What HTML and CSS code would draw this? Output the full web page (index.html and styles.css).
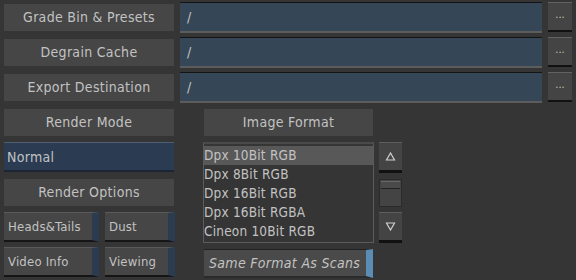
FILE: index.html
```html
<!DOCTYPE html>
<html>
<head>
<meta charset="utf-8">
<link rel="stylesheet" href="styles.css">
</head>
<body>
<div class="app">
  <div class="paths">
    <div class="path-row">
      <div class="label">Grade Bin &amp; Presets</div>
      <div class="field">/</div>
      <div class="dots">...</div>
    </div>
    <div class="path-row">
      <div class="label">Degrain Cache</div>
      <div class="field">/</div>
      <div class="dots">...</div>
    </div>
    <div class="path-row">
      <div class="label">Export Destination</div>
      <div class="field">/</div>
      <div class="dots">...</div>
    </div>
  </div>
  <div class="lower">
    <div class="col-left">
      <div class="label">Render Mode</div>
      <div class="select">Normal</div>
      <div class="label label-gap">Render Options</div>
      <div class="pair">
        <div class="toggle">Heads&amp;Tails</div>
        <div class="toggle">Dust</div>
      </div>
      <div class="pair">
        <div class="toggle">Video Info</div>
        <div class="toggle">Viewing</div>
      </div>
    </div>
    <div class="col-mid">
      <div class="label">Image Format</div>
      <div class="list">
        <div class="item sel">Dpx 10Bit RGB</div>
        <div class="item">Dpx 8Bit RGB</div>
        <div class="item">Dpx 16Bit RGB</div>
        <div class="item">Dpx 16Bit RGBA</div>
        <div class="item">Cineon 10Bit RGB</div>
      </div>
      <div class="same">Same Format As Scans</div>
    </div>
    <div class="col-scroll">
      <div class="sbtn">
        <svg width="11" height="9" viewBox="0 0 11 9"><path d="M5.5 1 L1.5 8 H9.5 Z" fill="none" stroke="#cfcfcf" stroke-width="1.2"/></svg>
      </div>
      <div class="track"><div class="thumb"></div></div>
      <div class="sbtn">
        <svg width="11" height="9" viewBox="0 0 11 9"><path d="M1.5 1 H9.5 L5.5 8 Z" fill="none" stroke="#cfcfcf" stroke-width="1.2"/></svg>
      </div>
    </div>
  </div>
</div>
</body>
</html>
```
FILE: styles.css
```css
html, body {
  margin: 0;
  padding: 0;
  background: #353535;
}
body {
  width: 576px;
  height: 280px;
  overflow: hidden;
  font-family: "DejaVu Sans", sans-serif;
  font-stretch: condensed;
  font-size: 14px;
  letter-spacing: 0.3px;
  color: #c2c2c2;
}
.app {
  padding-top: 2px;
}
.paths {
  display: flex;
  flex-direction: column;
  gap: 4px;
}
.path-row {
  display: flex;
  height: 31px;
}
.label {
  background: #464646;
  height: 27px;
  line-height: 27px;
  text-align: center;
  width: 170px;
  box-sizing: border-box;
}
.path-row .label {
  margin: 2px 0 0 4px;
}
.field {
  margin-left: 6px;
  width: 362px;
  box-sizing: border-box;
  background: #354656;
  border-top: 1px solid #141414;
  border-bottom: 2px solid #5c5c5c;
  line-height: 28px;
  padding-left: 7px;
}
.dots {
  margin-left: 6px;
  width: 24px;
  height: 30px;
  box-sizing: border-box;
  background: #444;
  border-top: 1px solid #626262;
  border-bottom: 2px solid #111;
  text-align: center;
  line-height: 24px;
  font-size: 11px;
  letter-spacing: 0px;
}
.lower {
  display: flex;
  margin-top: 6px;
}
.col-left {
  margin-left: 4px;
  width: 171px;
  display: flex;
  flex-direction: column;
}
.col-left .label { width: 170px; }
.select {
  margin-top: 6px;
  height: 30px;
  width: 170px;
  box-sizing: border-box;
  background: #2b3c52;
  border-top: 1px solid #4e5f73;
  border-bottom: 2px solid #1b2534;
  line-height: 28px;
  padding-left: 3px;
}
.label-gap { margin-top: 7px; }
.pair {
  display: flex;
  gap: 6px;
  margin-top: 6px;
}
.pair + .pair { margin-top: 5px; }
.toggle {
  height: 30px;
  box-sizing: border-box;
  background: #464646;
  border-top: 1px solid #5a5a5a;
  border-bottom: 2px solid #151515;
  border-right: 7px solid #2b3b50;
  line-height: 28px;
  padding-left: 4px;
  white-space: nowrap;
  overflow: hidden;
  font-size: 13px;
  letter-spacing: 0.2px;
}
.pair .toggle:first-child { width: 95px; }
.pair .toggle:last-child { width: 70px; }
.col-mid {
  margin-left: 28px;
  width: 171px;
  display: flex;
  flex-direction: column;
}
.col-mid .label { width: 169px; margin-left: 1px; }
.list {
  margin-top: 6px;
  height: 101px;
  box-sizing: border-box;
  border: 1px solid #5b5b5b;
  border-top: 2px solid #4a4a4a;
  padding-top: 2px;
}
.item {
  height: 19px;
  line-height: 18px;
  font-size: 13.5px;
  letter-spacing: 0.2px;
  white-space: nowrap;
}
.item.sel {
  background: #585858;
}
.same {
  margin-top: 6px;
  margin-left: 1px;
  width: 169px;
  height: 29px;
  box-sizing: border-box;
  background: #4a4a4a;
  border-top: 1px solid #222;
  border-bottom: 2px solid #2b2b2b;
  border-right: 7px solid #5b8cb4;
  font-style: italic;
  line-height: 27px;
  padding-left: 5px;
  white-space: nowrap;
  overflow: hidden;
}
.col-scroll {
  margin-left: 5px;
  margin-top: 33px;
  width: 23px;
  display: flex;
  flex-direction: column;
}
.sbtn {
  height: 31px;
  box-sizing: border-box;
  background: #444;
  border-top: 1px solid #5e5e5e;
  border-bottom: 3px solid #111;
  display: flex;
  align-items: center;
  justify-content: center;
}
.track {
  margin-top: 6px;
  height: 28px;
  box-sizing: border-box;
  background: #444;
  border: 1px solid #2a2a2a;
  padding: 1px 1px 0 1px;
  margin-bottom: 5px;
}
.thumb {
  height: 6px;
  background: #4a4a4a;
  border-top: 1px solid #666;
  border-bottom: 1px solid #222;
}
```
